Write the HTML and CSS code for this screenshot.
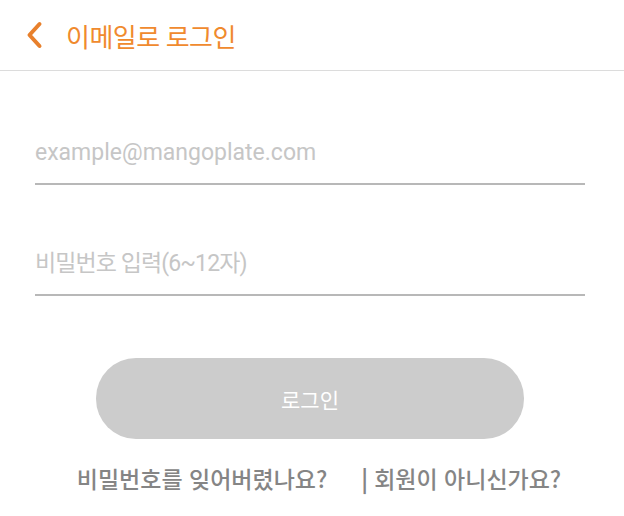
FILE: index.html
```html
<!DOCTYPE html>
<html lang="ko">
<head>
    <meta charset="UTF-8">
    <meta name="viewport" content="width=device-width, initial-scale=1.0">
    <title>이메일로 로그인</title>
    <link rel="stylesheet" href="styles.css">
</head>
<body>
    <header class="topbar">
        <button class="back" type="button" aria-label="뒤로">
            <svg width="18" height="28" viewBox="0 0 18 28">
                <path d="M14.5 3 L4.5 14 L14.5 25" fill="none" stroke="#e8802c" stroke-width="4" stroke-linecap="round" stroke-linejoin="round"/>
            </svg>
        </button>
        <h1 class="title">이메일로 로그인</h1>
    </header>

    <form class="login-form" onsubmit="return false;">
        <div class="field">
            <input type="email" placeholder="example@mangoplate.com">
        </div>
        <div class="field">
            <input class="password" type="password" placeholder="비밀번호 입력(6~12자)">
        </div>

        <button class="login-button" type="submit" disabled>로그인</button>

        <div class="links">
            <a href="#" class="link">비밀번호를 잊어버렸나요?</a>
            <span class="divider">|</span>
            <a href="#" class="link">회원이 아니신가요?</a>
        </div>
    </form>
</body>
</html>
```

FILE: styles.css
```css
body {
    margin: 0;
    background: #fff;
    font-family: Roboto, "Noto Sans CJK KR", sans-serif;
}

.topbar {
    height: 71px;
    display: flex;
    align-items: center;
    border-bottom: 1px solid #dcdcdc;
    box-sizing: border-box;
}

.back {
    border: none;
    background: none;
    padding: 0;
    margin: 0 0 0 25px;
    width: 18px;
    height: 28px;
    display: flex;
    cursor: pointer;
}

.title {
    margin: 0 0 0 23px;
    font-size: 26px;
    font-weight: 400;
    color: #f08a2e;
    letter-spacing: -0.5px;
}

.login-form {
    padding: 58px 39px 0 35px;
}

.field {
    border-bottom: 2px solid #b8b8b8;
    height: 46px;
    padding-bottom: 8px;
    display: flex;
    align-items: center;
}

.field + .field {
    margin-top: 55px;
}

.field input {
    border: none;
    outline: none;
    padding: 0;
    width: 100%;
    font-family: Roboto, "Noto Sans CJK KR", sans-serif;
    font-size: 23px;
    color: #333;
    background: none;
}

.field input::placeholder {
    color: #c6c6c6;
}

.field .password::placeholder {
    letter-spacing: -0.9px;
}

.login-button {
    display: block;
    width: 428px;
    height: 81px;
    margin: 62px 0 0 61px;
    border: none;
    border-radius: 40px;
    background: #cccccc;
    color: #fff;
    font-family: "Noto Sans CJK KR", sans-serif;
    font-size: 21px;
}

.links {
    display: flex;
    justify-content: center;
    align-items: center;
    margin: 22px 0 0 -35px;
    padding-left: 14px;
    width: 624px;
    box-sizing: border-box;
    font-family: "Noto Sans CJK KR", sans-serif;
    font-size: 23px;
    font-weight: 500;
    color: #858585;
}

.link {
    color: #858585;
    text-decoration: none;
}

.divider {
    margin: 0 6px 0 34px;
    font-weight: 700;
}
```
